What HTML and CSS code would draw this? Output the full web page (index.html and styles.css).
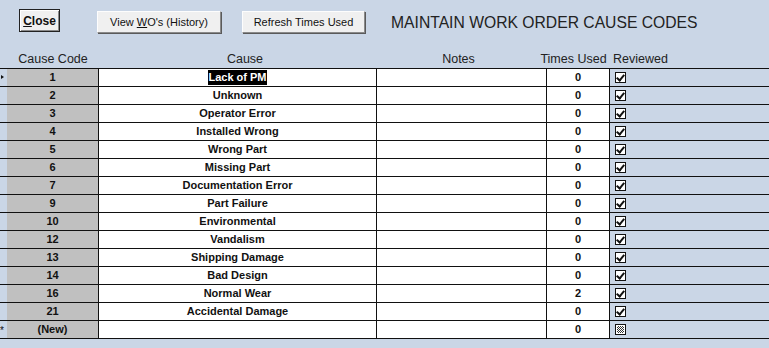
FILE: index.html
```html
<!DOCTYPE html>
<html>
<head>
<meta charset="utf-8">
<link rel="stylesheet" href="styles.css">
</head>
<body>
<div class="toolbar">
  <button class="btn btn-close"><u>C</u>lose</button>
  <button class="btn btn-view">View <u>W</u>O's (History)</button>
  <button class="btn btn-refresh">Refresh Times Used</button>
  <h1 class="title">MAINTAIN WORK ORDER CAUSE CODES</h1>
</div>
<div class="head">
  <div></div>
  <div>Cause Code</div>
  <div class="h-cause">Cause</div>
  <div class="h-notes">Notes</div>
  <div class="h-times">Times Used</div>
  <div class="h-rev">Reviewed</div>
</div>
<div class="grid">
  <div class="row"><div class="sel"><span class="arrow"></span></div><div class="code">1</div><div class="cause"><span class="hl">Lack of PM</span></div><div class="notes"></div><div class="times">0</div><div class="rev"><span class="chk"></span></div></div>
  <div class="row"><div class="sel"></div><div class="code">2</div><div class="cause">Unknown</div><div class="notes"></div><div class="times">0</div><div class="rev"><span class="chk"></span></div></div>
  <div class="row"><div class="sel"></div><div class="code">3</div><div class="cause">Operator Error</div><div class="notes"></div><div class="times">0</div><div class="rev"><span class="chk"></span></div></div>
  <div class="row"><div class="sel"></div><div class="code">4</div><div class="cause">Installed Wrong</div><div class="notes"></div><div class="times">0</div><div class="rev"><span class="chk"></span></div></div>
  <div class="row"><div class="sel"></div><div class="code">5</div><div class="cause">Wrong Part</div><div class="notes"></div><div class="times">0</div><div class="rev"><span class="chk"></span></div></div>
  <div class="row"><div class="sel"></div><div class="code">6</div><div class="cause">Missing Part</div><div class="notes"></div><div class="times">0</div><div class="rev"><span class="chk"></span></div></div>
  <div class="row"><div class="sel"></div><div class="code">7</div><div class="cause">Documentation Error</div><div class="notes"></div><div class="times">0</div><div class="rev"><span class="chk"></span></div></div>
  <div class="row"><div class="sel"></div><div class="code">9</div><div class="cause">Part Failure</div><div class="notes"></div><div class="times">0</div><div class="rev"><span class="chk"></span></div></div>
  <div class="row"><div class="sel"></div><div class="code">10</div><div class="cause">Environmental</div><div class="notes"></div><div class="times">0</div><div class="rev"><span class="chk"></span></div></div>
  <div class="row"><div class="sel"></div><div class="code">12</div><div class="cause">Vandalism</div><div class="notes"></div><div class="times">0</div><div class="rev"><span class="chk"></span></div></div>
  <div class="row"><div class="sel"></div><div class="code">13</div><div class="cause">Shipping Damage</div><div class="notes"></div><div class="times">0</div><div class="rev"><span class="chk"></span></div></div>
  <div class="row"><div class="sel"></div><div class="code">14</div><div class="cause">Bad Design</div><div class="notes"></div><div class="times">0</div><div class="rev"><span class="chk"></span></div></div>
  <div class="row"><div class="sel"></div><div class="code">16</div><div class="cause">Normal Wear</div><div class="notes"></div><div class="times">2</div><div class="rev"><span class="chk"></span></div></div>
  <div class="row"><div class="sel"></div><div class="code">21</div><div class="cause">Accidental Damage</div><div class="notes"></div><div class="times">0</div><div class="rev"><span class="chk"></span></div></div>
  <div class="row"><div class="sel star">*</div><div class="code">(New)</div><div class="cause"></div><div class="notes"></div><div class="times">0</div><div class="rev"><span class="chk null"></span></div></div>
</div>
</body>
</html>
```
FILE: styles.css
```css
html, body {
  margin: 0;
  padding: 0;
}
body {
  width: 769px;
  height: 348px;
  overflow: hidden;
  background: #cad6e6;
  font-family: "Liberation Sans", Arial, sans-serif;
  color: #1a1a1a;
}
.toolbar {
  height: 50px;
  display: flex;
  align-items: flex-start;
  box-sizing: border-box;
  padding-top: 9px;
}
.btn {
  font-family: "Liberation Sans", Arial, sans-serif;
  font-size: 11px;
  color: #111;
  background: #f0f0f0;
  border: 1px solid;
  border-color: #fdfdfd #8a8a8a #8a8a8a #fdfdfd;
  box-shadow: 1px 1px 0 #5a5a5a;
  padding: 0;
  margin: 0;
  height: 22px;
}
.btn-close {
  margin-left: 19px;
  width: 41px;
  height: 23px;
  font-weight: bold;
  font-size: 12px;
  border-color: #222;
  box-shadow: inset 1px 1px 0 #fff, inset -1px -1px 0 #8a8a8a;
}
.btn-view {
  margin-left: 37px;
  margin-top: 2px;
  width: 124px;
}
.btn-refresh {
  margin-left: 21px;
  margin-top: 2px;
  width: 123px;
}
.title {
  margin: 5px 0 0 26px;
  font-size: 15.7px;
  font-weight: normal;
  color: #222;
  white-space: nowrap;
}
.head, .row {
  display: grid;
  grid-template-columns: 7px 92px 278px 170px 63px 1fr;
}
.head {
  height: 18px;
  font-size: 12.5px;
  color: #222;
  align-items: center;
  white-space: nowrap;
}
.head > div {
  display: flex;
  justify-content: center;
  box-sizing: border-box;
  padding-bottom: 1px;
}
.head > .h-cause {
  padding-left: 14px;
}
.head > .h-notes {
  padding-right: 7px;
}
.head > .h-times {
  padding-right: 10px;
}
.head > .h-rev {
  justify-content: flex-start;
  padding-left: 3px;
}
.grid {
  border-top: 1px solid #111;
}
.row {
  height: 18px;
  box-sizing: border-box;
  border-bottom: 1px solid #111;
  font-size: 11px;
  font-weight: bold;
  color: #111;
}
.row > div {
  display: flex;
  align-items: center;
  justify-content: center;
  box-sizing: border-box;
  padding-bottom: 1px;
}
.code {
  background: #c0c0c0;
  border-right: 1px solid #111;
}
.cause, .notes, .times {
  background: #fff;
  border-right: 1px solid #111;
}
.row > .rev {
  justify-content: flex-start;
  padding-left: 5px;
}
.arrow {
  width: 0;
  height: 0;
  border-top: 2px solid transparent;
  border-bottom: 2px solid transparent;
  border-left: 3px solid #111;
  margin-left: -3px;
}
.row > .star {
  font-size: 10px;
  font-weight: normal;
  justify-content: flex-start;
  padding-top: 2px;
}
.hl {
  background: #000;
  color: #fff;
  padding: 1px 0 2px;
}
.chk {
  width: 11px;
  height: 11px;
  box-sizing: border-box;
  border: 1px solid #111;
  background: #fff;
  position: relative;
}
.chk::after {
  content: "";
  position: absolute;
  left: 2px;
  top: 0px;
  width: 3px;
  height: 6px;
  border: solid #111;
  border-width: 0 2px 2px 0;
  transform: rotate(40deg);
}
.chk.null {
  background: repeating-conic-gradient(#333 0 25%, #fff 0 50%) 0 0 / 2px 2px;
  box-shadow: inset 0 0 0 1px #fff;
}
.chk.null::after {
  display: none;
}
```
